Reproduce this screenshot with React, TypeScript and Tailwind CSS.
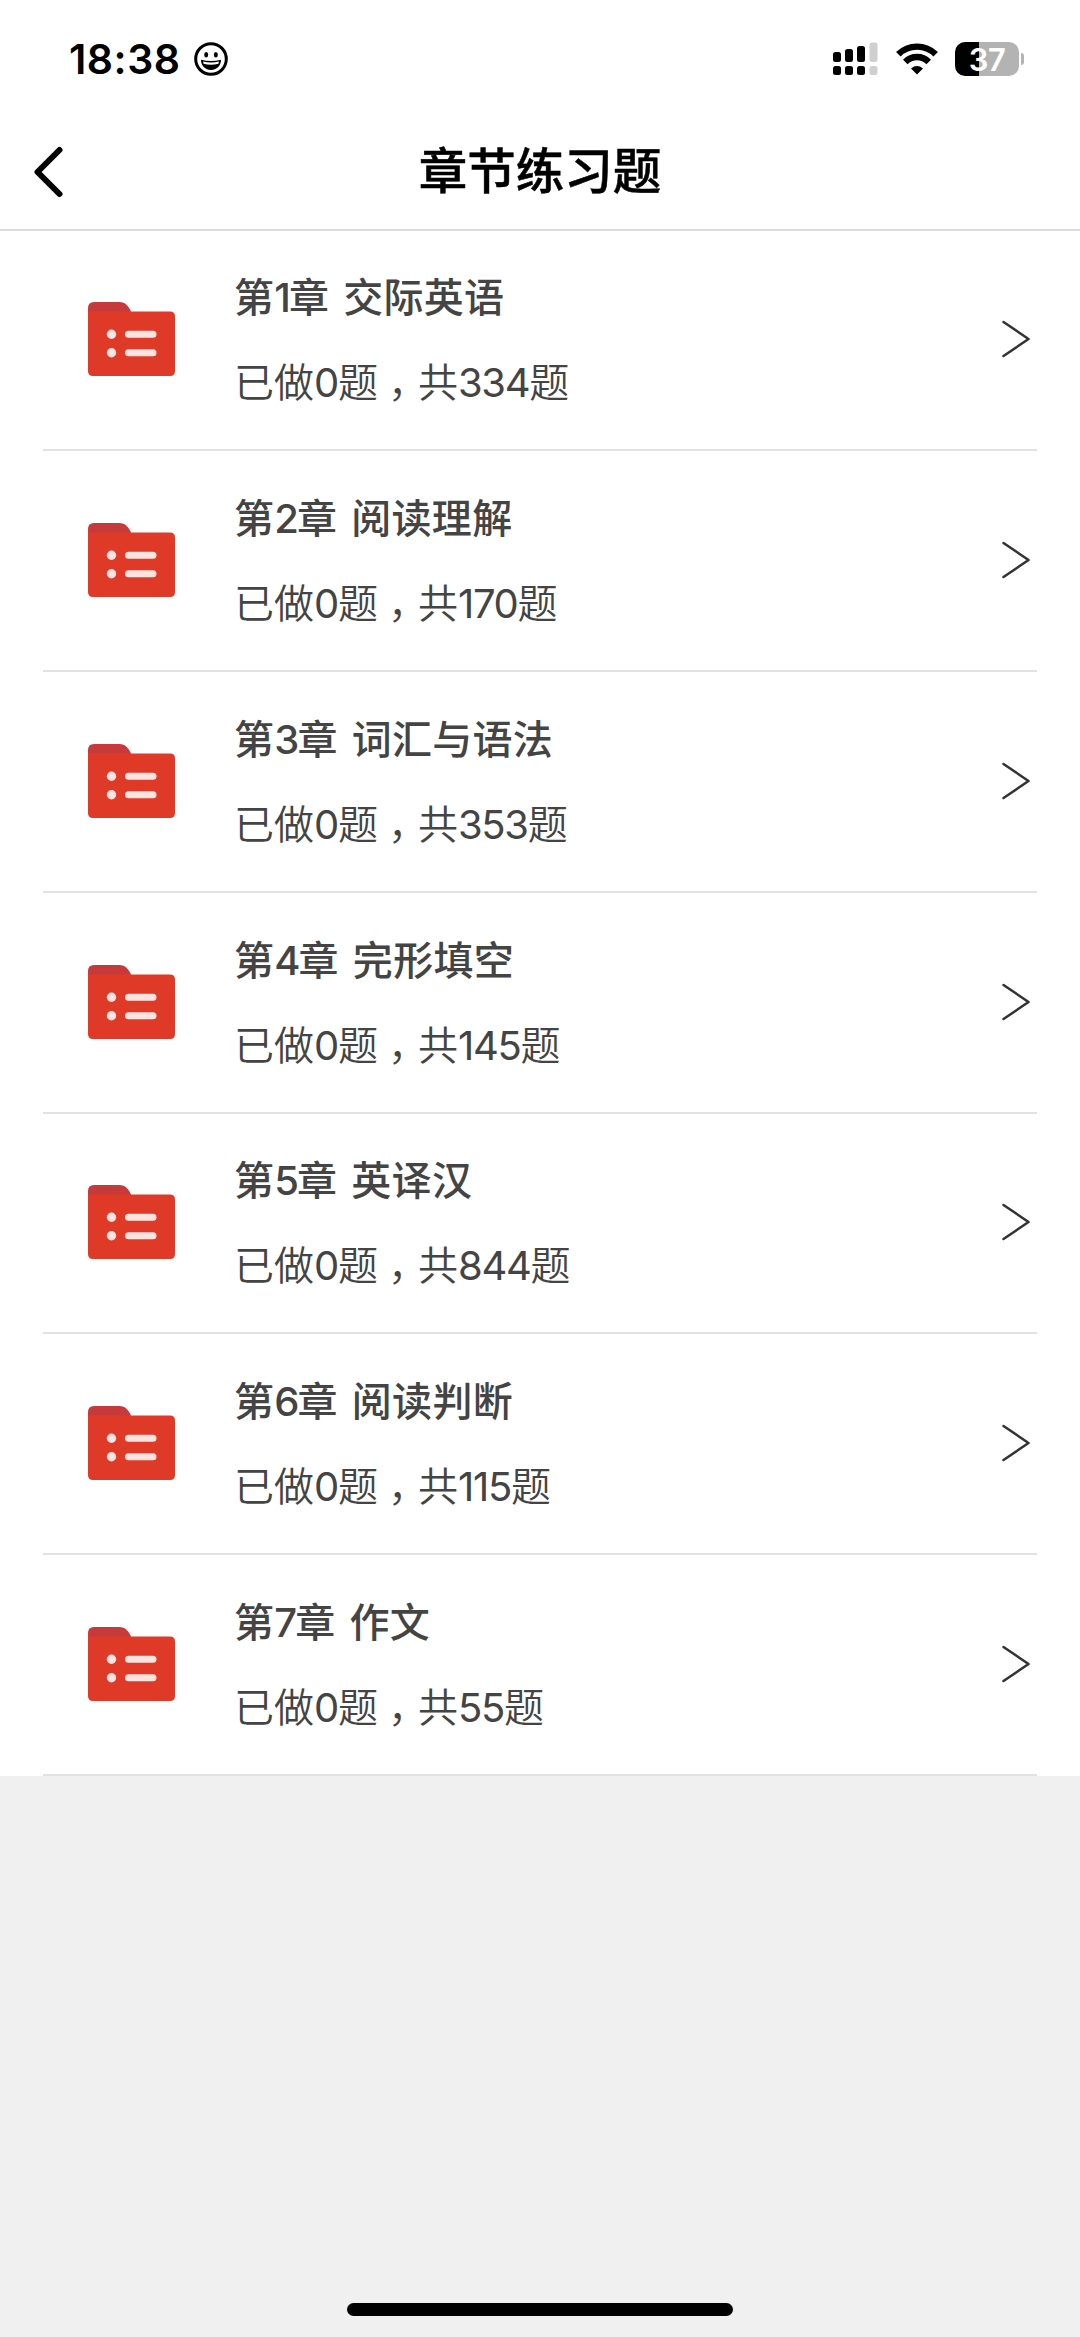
const chapters = [
  { id: 1, name: "交际英语", done: 0, total: 334 },
  { id: 2, name: "阅读理解", done: 0, total: 170 },
  { id: 3, name: "词汇与语法", done: 0, total: 353 },
  { id: 4, name: "完形填空", done: 0, total: 145 },
  { id: 5, name: "英译汉", done: 0, total: 844 },
  { id: 6, name: "阅读判断", done: 0, total: 115 },
  { id: 7, name: "作文", done: 0, total: 55 },
];

function SmileIcon() {
  return (
    <svg width="34" height="34" viewBox="0 0 34 34" fill="none">
      <circle cx="17" cy="17" r="15.3" stroke="#000" strokeWidth="3" />
      <ellipse cx="12.2" cy="12.7" rx="2" ry="2.7" fill="#000" />
      <ellipse cx="21.8" cy="12.7" rx="2" ry="2.7" fill="#000" />
      <path d="M7 17.8Q17 20.2 27 17.8C27 24 22.5 28 17 28S7 24 7 17.8Z" fill="#000" />
      <path d="M9 19.6Q17 21.6 25 19.6L24.4 21.8Q17 23.6 9.6 21.8Z" fill="#fff" />
    </svg>
  );
}

function SignalIcon() {
  return (
    <svg width="45" height="34" viewBox="0 0 45 34">
      <rect x="0" y="10" width="8" height="10" rx="2.5" />
      <rect x="12" y="7" width="8" height="13" rx="2.5" />
      <rect x="24" y="4" width="8" height="16" rx="2.5" />
      <rect x="36.5" y="0.5" width="8" height="19.5" rx="2.5" fill="#cfcfcf" />
      <rect x="0" y="24" width="8" height="9" rx="2.5" />
      <rect x="12" y="24" width="8" height="9" rx="2.5" />
      <rect x="24" y="24" width="8" height="9" rx="2.5" />
      <rect x="36.5" y="24" width="8" height="9" rx="2.5" fill="#cfcfcf" />
    </svg>
  );
}

function WifiIcon() {
  return (
    <svg width="42" height="32" viewBox="0 0 42 32" fill="none" stroke="#000" strokeWidth="6.4">
      <path d="M2.3 11.3A26.5 26.5 0 0 1 39.7 11.3" />
      <path d="M9.3 18.9A16.5 16.5 0 0 1 32.7 18.9" />
      <path d="M15 25.5Q21 20.7 27 25.5L21 31.5Z" fill="#000" stroke="none" />
    </svg>
  );
}

function Battery() {
  return (
    <div className="flex items-center gap-[2px]">
      <div className="flex h-[34px] w-[64px] items-center justify-center rounded-[10px] bg-[linear-gradient(to_right,#000_24px,#b3b3b3_24px)] text-[31px] leading-none font-semibold tracking-[-0.5px] text-white">
        37
      </div>
      <div className="h-[12px] w-[3px] rounded-r-full bg-[#b3b3b3]" />
    </div>
  );
}

function FolderIcon() {
  return (
    <svg width="87" height="74" viewBox="0 0 87 74">
      <path d="M0 20V6Q0 0 6 0H31C38 0 41 5 43.5 10.5V20Z" fill="#c63a3c" />
      <path d="M0 9.5H82Q87 9.5 87 14.5V69Q87 74 82 74H5Q0 74 0 69Z" fill="#df3a28" />
      <circle cx="23.5" cy="32.2" r="4.7" fill="#ffe3e0" />
      <circle cx="23.5" cy="50.7" r="4.7" fill="#ffe3e0" />
      <rect x="37" y="28.7" width="31.5" height="7" rx="3.5" fill="#ffe3e0" />
      <rect x="37" y="47.2" width="31.5" height="7" rx="3.5" fill="#ffe3e0" />
    </svg>
  );
}

function ChapterRow({ chapter }: any) {
  return (
    <div className="mx-[43px] flex h-[220.75px] items-center border-b-2 border-[#e2e2e2] pr-[7px] pb-px pl-[45px] text-[#444]">
      <FolderIcon />
      <div className="ml-[59px] flex-1 pt-[3px] text-[40px] whitespace-nowrap">
        <h2 className="h-[85px] leading-[60px] font-medium tracking-[0.3px] [word-spacing:3px]">
          第<span className="tracking-[-2px]">{chapter.id}</span>章 {chapter.name}
        </h2>
        <p className="h-[60px] leading-[60px] font-[350]">
          已做<span className="font-normal tracking-[-1.3px]">{chapter.done}</span>题
          <span className="inline-block w-[40px] text-center [font-feature-settings:'halt']">，</span>
          共<span className="font-normal tracking-[-1.3px]">{chapter.total}</span>题
        </p>
      </div>
      <svg width="28" height="38" viewBox="0 0 28 38" fill="none" stroke="#333" strokeWidth="2.5" strokeLinecap="round" strokeLinejoin="round">
        <path d="M1.5 2L26.5 19L1.5 36" />
      </svg>
    </div>
  );
}

export default function App() {
  return (
    <div className="flex h-[2337px] w-[1080px] flex-col bg-[#f0f0f0] font-[Inter,'Noto_Sans_CJK_SC',sans-serif] text-black">
      <header className="h-[230.5px] shrink-0 border-b-2 border-[#dcdcdc] bg-white">
        <div className="flex h-[118px] items-center pr-[56px] pl-[69px]">
          <span className="text-[41px] leading-none font-semibold tracking-[0.5px]">18:38</span>
          <span className="ml-[13px]">
            <SmileIcon />
          </span>
          <div className="ml-auto flex items-center">
            <SignalIcon />
            <span className="mr-[17px] ml-[18px]">
              <WifiIcon />
            </span>
            <Battery />
          </div>
        </div>
        <div className="flex h-[108px] items-center pl-[33px]">
          <svg width="32" height="52" viewBox="0 0 32 52" fill="none" stroke="#000" strokeWidth="6" strokeLinecap="round" strokeLinejoin="round">
            <path d="M26.5 4L4.5 26L26.5 48" />
          </svg>
          <h1 className="mr-[65px] flex-1 text-center text-[48.5px] leading-none font-medium [-webkit-text-stroke:0.5px_#000]">
            章节练习题
          </h1>
        </div>
      </header>
      <main className="bg-white">
        {chapters.map((c) => (
          <ChapterRow key={c.id} chapter={c} />
        ))}
      </main>
      <div className="mx-auto mt-auto mb-[21px] h-[13px] w-[386px] rounded-full bg-black" />
    </div>
  );
}
